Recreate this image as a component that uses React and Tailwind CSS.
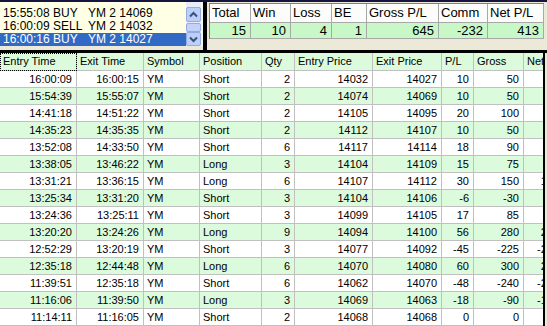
import React from "react";

const trades = [
  ["16:00:09", "16:00:15", "YM", "Short", 2, 14032, 14027, 10, 50],
  ["15:54:39", "15:55:07", "YM", "Short", 2, 14074, 14069, 10, 50],
  ["14:41:18", "14:51:22", "YM", "Short", 2, 14105, 14095, 20, 100],
  ["14:35:23", "14:35:35", "YM", "Short", 2, 14112, 14107, 10, 50],
  ["13:52:08", "14:33:50", "YM", "Short", 6, 14117, 14114, 18, 90],
  ["13:38:05", "13:46:22", "YM", "Long", 3, 14104, 14109, 15, 75],
  ["13:31:21", "13:36:15", "YM", "Long", 6, 14107, 14112, 30, 150],
  ["13:25:34", "13:31:20", "YM", "Short", 3, 14104, 14106, -6, -30],
  ["13:24:36", "13:25:11", "YM", "Short", 3, 14099, 14105, 17, 85],
  ["13:20:20", "13:24:26", "YM", "Long", 9, 14094, 14100, 56, 280],
  ["12:52:29", "13:20:19", "YM", "Short", 3, 14077, 14092, -45, -225],
  ["12:35:18", "12:44:48", "YM", "Long", 6, 14070, 14080, 60, 300],
  ["11:39:51", "12:35:18", "YM", "Short", 6, 14062, 14070, -48, -240],
  ["11:16:06", "11:39:50", "YM", "Long", 3, 14069, 14063, -18, -90],
  ["11:14:11", "11:16:05", "YM", "Short", 2, 14068, 14068, 0, 0],
];

const orders = [
  { t: "15:55:08", a: "BUY", s: "YM 2 14069" },
  { t: "16:00:09", a: "SELL", s: "YM 2 14032" },
  { t: "16:00:16", a: "BUY", s: "YM 2 14027", sel: true },
];

const headers = [
  "Entry Time",
  "Exit Time",
  "Symbol",
  "Position",
  "Qty",
  "Entry Price",
  "Exit Price",
  "P/L",
  "Gross",
  "Net",
];

const align = ["r", "r", "l", "l", "r", "r", "r", "r", "r", "r"];

function Chevron({ up }) {
  return (
    <svg width="9" height="7" viewBox="0 0 9 7" className="block">
      <path
        d={up ? "M1 5.5 L4.5 2 L8 5.5" : "M1 1.5 L4.5 5 L8 1.5"}
        fill="none"
        stroke="#3b4f7a"
        strokeWidth="2"
      />
    </svg>
  );
}

function ScrollBar() {
  return (
    <div className="w-[15px] shrink-0 h-[44px] bg-[#e9ebf5] flex flex-col pt-[5px]">
      <div className="h-[15px] shrink-0 rounded-[2px] border border-[#93addf] bg-[#bccefa] flex items-center justify-center">
        <Chevron up />
      </div>
      <div className="h-[9px] shrink-0 mt-[1px] rounded-[2px] border border-[#93addf] bg-[#c2d2fb]" />
      <div className="h-[14px] shrink-0 rounded-[2px] border border-[#93addf] bg-[#bccefa] flex items-center justify-center">
        <Chevron />
      </div>
    </div>
  );
}

function OrderList() {
  return (
    <div className="w-[203px] shrink-0 flex items-start">
      <div className="w-[186px] shrink-0 h-[44px] bg-[#ffffe6] pt-[5px] text-[12px]">
        {orders.map((o) => (
          <div
            key={o.t}
            className={
              "flex h-[13px] leading-[13px] pl-[3px] " +
              (o.sel ? "bg-[#316ac5] text-white" : "text-black")
            }
          >
            <span className="w-[50px] shrink-0">{o.t}</span>
            <span className="w-[35px] shrink-0">{o.a}</span>
            <span>{o.s}</span>
          </div>
        ))}
      </div>
      <ScrollBar />
      <div className="w-[2px] shrink-0 h-[44px] bg-[#f6f5f0]" />
    </div>
  );
}

function Summary() {
  const cols = ["Total", "Win", "Loss", "BE", "Gross P/L", "Comm", "Net P/L"];
  const vals = ["15", "10", "4", "1", "645", "-232", "413"];
  return (
    <div className="flex-1 pl-[2px] pt-[1px]">
      <div className="w-[335px] border-t border-l border-[#808080] text-[13px]">
        <div className="grid grid-cols-[41px_40px_41px_35px_72px_49px_56px] bg-[#fcfcfa]">
          {cols.map((c) => (
            <div
              key={c}
              className="h-[19px] leading-[18px] pl-[2px] border-r border-b border-[#a8a8a8] whitespace-nowrap"
            >
              {c}
            </div>
          ))}
        </div>
        <div className="grid grid-cols-[41px_40px_41px_35px_72px_49px_56px] bg-[#c8f8c8]">
          {vals.map((v, i) => (
            <div
              key={i}
              className="h-[16px] leading-[15px] pr-[4px] text-right border-r border-b border-[#a8a8a8]"
            >
              {v}
            </div>
          ))}
        </div>
      </div>
    </div>
  );
}

function Grid() {
  const gridCols =
    "grid grid-cols-[77px_67px_56px_62px_33px_78px_69px_32px_50px_40px] w-[564px]";
  return (
    <div className="text-[11px]">
      <div className={gridCols + " bg-[#dcfadc]"}>
        {headers.map((h, i) => (
          <div
            key={h}
            className={
              "h-[18px] leading-[17px] pl-[3px] border-r border-b border-[#c0c0c0] whitespace-nowrap overflow-hidden " +
              (i === 0 ? "outline outline-1 outline-dotted outline-black -outline-offset-1" : "")
            }
          >
            {h}
          </div>
        ))}
      </div>
      {trades.map((t, r) => {
        const net = t[8] - 4 * t[4];
        const cells = [...t, net];
        return (
          <div
            key={r}
            className={gridCols + (r % 2 === 1 ? " bg-[#dcfadc]" : " bg-white")}
          >
            {cells.map((c, i) => (
              <div
                key={i}
                className={
                  "h-[17px] leading-[16px] border-r border-b border-[#c0c0c0] whitespace-nowrap overflow-hidden " +
                  (align[i] === "r" ? "text-right pr-[4px]" : "text-left pl-[3px]")
                }
              >
                {c}
              </div>
            ))}
          </div>
        );
      })}
    </div>
  );
}

export default function App() {
  return (
    <div className="w-[547px] h-[326px] overflow-hidden bg-[#ece9d8] flex flex-col font-['Liberation_Sans',Arial,sans-serif] text-black">
      <div className="h-[2px] shrink-0 bg-[#14143c]" />
      <div className="h-[48px] shrink-0 flex">
        <OrderList />
        <div className="w-[4px] shrink-0 bg-black" />
        <Summary />
      </div>
      <div className="h-[3px] shrink-0 bg-black" />
      <div className="flex-1 flex min-h-0">
        <div className="w-[543px] shrink-0 overflow-hidden bg-white">
          <Grid />
        </div>
        <div className="w-[2px] shrink-0 bg-black" />
      </div>
    </div>
  );
}
